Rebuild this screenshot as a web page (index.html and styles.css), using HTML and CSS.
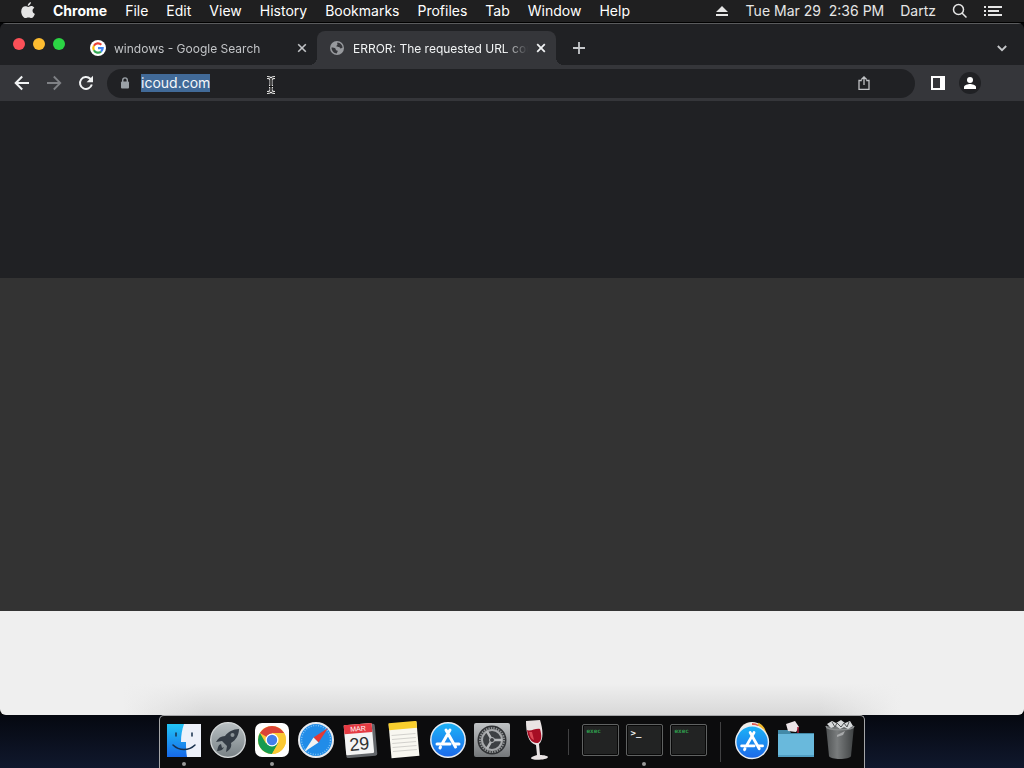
FILE: index.html
```html
<!DOCTYPE html>
<html lang="en">
<head>
<meta charset="utf-8">
<title>Desktop</title>
<link rel="stylesheet" href="styles.css">
</head>
<body>
<header class="menubar">
  <nav class="menus" aria-label="Application menu">
    <button class="apple" aria-label="Apple menu"><svg width="14" height="17" viewBox="0 0 14 17"><path fill="#e4e4e4" d="M9.900 0c.1 1.900-1.300 3.800-3.100 3.900C6.600 2.200 8.200.3 9.900 0zM7.200 4.900c.8 0 1.600-.8 3-.8 1.200 0 2.400.7 3.100 1.700-2.600 1.500-2.200 5 .6 6.100-.6 1.700-2 4.100-3.500 4.100-1 0-1.500-.6-2.900-.6s-1.900.6-2.900.6C2.500 16.100.2 12.500.2 9.400.2 6 2.300 4.200 4.300 4.200c1.300 0 2.200.7 2.900.7z"/></svg></button>
    <button class="app-name">Chrome</button>
    <button>File</button>
    <button>Edit</button>
    <button>View</button>
    <button>History</button>
    <button>Bookmarks</button>
    <button>Profiles</button>
    <button>Tab</button>
    <button>Window</button>
    <button>Help</button>
  </nav>
  <div class="status">
    <button aria-label="Eject"><svg width="12" height="12" viewBox="0 0 12 12" fill="#e6e6e6"><path d="M6 1l6 6H0zM0 9h12v2H0z"/></svg></button>
    <button class="clock">Tue Mar 29&nbsp; 2:36 PM</button>
    <button>Dartz</button>
    <button aria-label="Search"><svg width="16" height="16" viewBox="0 0 16 16" fill="none" stroke="#e6e6e6" stroke-width="1.500"><circle cx="6.500" cy="6.500" r="5"/><path d="M10 10l4.500 4.500"/></svg></button>
    <button aria-label="Notification Center"><svg width="18" height="12" viewBox="0 0 18 12" fill="#e6e6e6"><path d="M0 1h2v2H0zM4 1h14v2H4zM0 5h2v2H0zM4 5h11v2H4zM0 9h2v2H0zM4 9h14v2H4z"/></svg></button>
  </div>
</header>

<main class="window">
  <div class="tabstrip">
    <div class="lights">
      <button class="light red" aria-label="Close window"></button>
      <button class="light yellow" aria-label="Minimize window"></button>
      <button class="light green" aria-label="Zoom window"></button>
    </div>
    <div class="tab">
      <svg width="16" height="16" viewBox="0 0 16 16"><circle cx="8" cy="8" r="8" fill="#fff"/><g fill="none" stroke-width="2.200"><path stroke="#ea4335" d="M3.900 5.700A4.700 4.700 0 0 1 11.300 4.700"/><path stroke="#fbbc05" d="M3.900 10.300a4.700 4.700 0 0 1 0-4.600"/><path stroke="#34a853" d="M11 11.600a4.700 4.700 0 0 1-7.100-1.300"/><path stroke="#4285f4" d="M8 8.100h4.700a4.600 4.600 0 0 1-1.700 3.500"/></g></svg>
      <span class="tab-title">windows - Google Search</span>
      <button class="close" aria-label="Close tab"><svg width="10" height="10" viewBox="0 0 10 10" stroke="currentColor" stroke-width="1.600"><path d="M1.200 1.200l7.600 7.600M8.800 1.200L1.200 8.800"/></svg></button>
    </div>
    <div class="tab active">
      <svg width="16" height="16" viewBox="0 0 16 16"><circle cx="8" cy="8" r="7" fill="#97999d"/><path fill="#35363a" d="M8.500 2.400c2.800.2 5 2.600 5.100 5.300-.7 0-1 .9-2.100.7-.8-.2-.5-1.200-1.500-1.400-1-.2-2.200.2-2.500-.7-.2-.8.9-.9 1-1.700.1-.8-.7-1.300 0-2.200zM2.500 7.500c1.500.1 3.200.2 3.900 1 .6.7.1 1.300.8 1.800.6.400 1.500.2 1.500 1 0 .7-.8.900-.8 2.200-3-.1-5.400-2.600-5.400-6z"/></svg>
      <span class="tab-title">ERROR: The requested URL could not be retrieved</span>
      <button class="close" aria-label="Close tab"><svg width="10" height="10" viewBox="0 0 10 10" stroke="currentColor" stroke-width="1.800"><path d="M1.200 1.200l7.600 7.600M8.800 1.200L1.200 8.800"/></svg></button>
    </div>
    <button class="new-tab" aria-label="New tab"><svg width="12" height="12" viewBox="0 0 12 12" stroke="#c6c8cb" stroke-width="1.800"><path d="M6 0v12M0 6h12"/></svg></button>
    <button class="tab-search" aria-label="Search tabs"><svg width="10" height="7" viewBox="0 0 10 7" fill="none" stroke="#c6c8cb" stroke-width="1.800"><path d="M.8 1L5 5.200 9.200 1"/></svg></button>
  </div>

  <div class="toolbar">
    <button aria-label="Back"><svg width="16" height="16" viewBox="0 0 16 16" fill="none" stroke="#f1f3f4" stroke-width="2"><path d="M15 8H2M8.200 1.500L1.700 8l6.500 6.500"/></svg></button>
    <button aria-label="Forward"><svg width="16" height="16" viewBox="0 0 16 16" fill="none" stroke="#7f8185" stroke-width="1.800"><path d="M1 8h13M7.800 1.500L14.300 8l-6.500 6.500"/></svg></button>
    <button aria-label="Reload"><svg width="16" height="16" viewBox="0 0 16 16" fill="none" stroke="#f1f3f4" stroke-width="2"><path d="M13.800 9.600A6 6 0 1 1 12.300 3.800L14 5.500"/><path fill="#f1f3f4" stroke="none" d="M15 .8v6.400H8.600z"/></svg></button>
    <div class="omnibox">
      <svg width="10" height="12" viewBox="0 0 10 12"><path fill="none" stroke="#9aa0a6" stroke-width="1.400" d="M2.700 5V3.200a2.300 2.300 0 0 1 4.600 0V5"/><rect x="1" y="4.500" width="8" height="7" rx="1" fill="#9aa0a6"/></svg>
      <input class="url" type="text" value="icoud.com" aria-label="Address and search bar" spellcheck="false" autofocus>
      <button class="share" aria-label="Share"><svg width="12" height="14" viewBox="0 0 12 14" fill="none" stroke="#c0c2c5" stroke-width="1.300"><path d="M3.800 4.500H1v8.800h10V4.500H8.200M6 9V1M3.400 3.500L6 .9l2.600 2.600"/></svg></button>
    </div>
    <button aria-label="Side panel"><svg width="14" height="14" viewBox="0 0 14 14"><path fill="#fff" fill-rule="evenodd" d="M0 0h14v14H0zM2 2v10h7V2z"/></svg></button>
    <button class="profile" aria-label="Profile"><svg width="12" height="12" viewBox="0 0 12 12" fill="#fff"><circle cx="6" cy="3" r="3"/><path d="M0 12v-2c0-2 4-3 6-3s6 1 6 3v2z"/></svg></button>
  </div>

  <div class="page">
    <div class="band dark"></div>
    <div class="band grey"></div>
    <div class="band light-band"></div>
  </div>
  <svg class="pointer" width="10" height="18" viewBox="0 0 10 18" fill="none"><path stroke="#e8e8e8" stroke-width="3" d="M1 1.500c2.500 0 4 .5 4 2.500v10c0 2-1.500 2.500-4 2.500M9 1.500C6.500 1.500 5 2 5 4v10c0 2 1.500 2.500 4 2.500M3 10.500h4"/><path stroke="#111" stroke-width="1" d="M1 1.500c2.500 0 4 .5 4 2.500v10c0 2-1.500 2.500-4 2.500M9 1.500C6.500 1.500 5 2 5 4v10c0 2 1.500 2.500 4 2.500M3 10.500h4"/></svg>
</main>

<footer class="desktop">
  <nav class="dock" aria-label="Dock">
    <button class="app running" aria-label="Finder"><svg width="36" height="36" viewBox="0 0 36 36"><defs><linearGradient id="finder" x2="0" y2="1"><stop stop-color="#22c5f5"/><stop offset="1" stop-color="#1769ea"/></linearGradient></defs><path fill="#edf1fa" d="M1 2h34v33H1z"/><path fill="url(#finder)" d="M1 2h17c-2 6-3 11-3 18h5c0 5 0 10 1 15H1z"/><path fill="none" stroke="#17304d" stroke-width="1.500" stroke-linecap="round" d="M10 11v3M26 11v3M7 23c6 6 16 6 22 0"/></svg></button>
    <button class="app" aria-label="Launchpad"><svg width="36" height="36" viewBox="0 0 36 36"><defs><linearGradient id="launch" x2="0" y2="1"><stop stop-color="#b9c0c3"/><stop offset="1" stop-color="#788185"/></linearGradient></defs><circle cx="18" cy="18" r="17.300" fill="url(#launch)" stroke="#d4d8d9" stroke-width="1.300"/><path fill="#343c45" d="M29 7c-6 0-11 3-14 7-4 0-7 2-9 6l6-1 5 5-1 6c4-2 6-5 5-9 5-3 8-8 8-14zM11 22c-3 1-3 4-4 7 3 0 6-1 7-4l-2 1z"/><circle cx="22.500" cy="13" r="2" fill="#8b9397"/></svg></button>
    <button class="app running" aria-label="Chrome"><svg width="36" height="36" viewBox="0 0 36 36"><rect x="1" y="1" width="34" height="34" rx="7" fill="#fff"/><circle cx="18" cy="18" r="14" fill="#fbc934"/><path fill="#db4437" d="M18 18L5.900 11A14 14 0 0 1 30.100 11H18z"/><path fill="#169b50" d="M5.900 11A14 14 0 0 0 18 32l6-10.500L18 18l-6 3.500z"/><path fill="#fbc934" d="M18 11h12.100A14 14 0 0 1 18 32l6-10.500z"/><circle cx="18" cy="18" r="6.500" fill="#fff"/><circle cx="18" cy="18" r="5.200" fill="#437fea"/></svg></button>
    <button class="app" aria-label="Safari"><svg width="36" height="36" viewBox="0 0 36 36"><circle cx="18" cy="18" r="17" fill="#218ce8" stroke="#e8eaed" stroke-width="2"/><circle cx="18" cy="18" r="14.500" fill="none" stroke="#7cc2f6" stroke-width="1.500" stroke-dasharray="1 1.500"/><path fill="#e53935" d="M30 6L15.500 15.500l5 5z"/><path fill="#f2f2f2" d="M6 30l9.500-14.500 5 5z"/></svg></button>
    <button class="app" aria-label="Calendar"><svg width="36" height="36" viewBox="0 0 36 36"><g transform="rotate(-5 18 18)"><rect x="3" y="3" width="31" height="32" rx="2" fill="#63666a"/><rect x="3" y="2" width="28" height="30" rx="1" fill="#f4f4f4"/><path fill="#e53b43" d="M3 2h28v9H3z"/><text x="17" y="9" text-anchor="middle" class="cal-month">MAR</text><text x="17" y="28" text-anchor="middle" class="cal-day">29</text></g></svg></button>
    <button class="app" aria-label="Notes"><svg width="36" height="38" viewBox="0 0 36 38"><g transform="rotate(-5 18 19)"><path fill="#f8f7f0" d="M4 2h28v34H4z"/><path fill="#f9cf2e" d="M4 1h28v7H4z"/><path stroke="#d2d1cc" d="M6 13.500h24M6 17.500h24M6 21.500h24M6 25.500h24M6 29.500h24"/></g></svg></button>
    <button class="app" aria-label="App Store"><svg width="36" height="36" viewBox="0 0 36 36"><defs><linearGradient id="store" x2="0" y2="1"><stop stop-color="#1cb4f7"/><stop offset="1" stop-color="#1c68ea"/></linearGradient><g id="store-icon"><circle cx="18" cy="18" r="17.200" fill="url(#store)" stroke="#e9edf2" stroke-width="1.500"/><path fill="none" stroke="#fff" stroke-width="3" stroke-linecap="round" d="M16 8l9.500 17M20 8l-8 14M7 22h13M25 22h4M10.500 25l-.5 1"/></g></defs><use href="#store-icon"/></svg></button>
    <button class="app" aria-label="System Preferences"><svg width="36" height="36" viewBox="0 0 36 36"><defs><linearGradient id="pref" x2="0" y2="1"><stop stop-color="#c0c3c5"/><stop offset="1" stop-color="#74777a"/></linearGradient></defs><rect y="1" width="36" height="34" rx="2" fill="url(#pref)"/><circle cx="18" cy="18" r="14.500" fill="#303235"/><circle cx="18" cy="18" r="12" fill="none" stroke="#8e9193" stroke-width="2" stroke-dasharray="1.500 1"/><circle cx="18" cy="18" r="10" fill="#3d4043" stroke="#a6a8aa" stroke-width="2"/><path stroke="#b6b8ba" stroke-width="2.500" d="M18 18h10M18 18l-5-8.700M18 18l-5 8.700"/><circle cx="18" cy="18" r="2.500" fill="#393b3e" stroke="#b6b8ba"/></svg></button>
    <button class="app" aria-label="Wine"><svg width="36" height="42" viewBox="0 0 36 42"><path fill="#e9e3e3" d="M8 2l14-1c3 9 4 20-1 24l1 11c4 0 8 1 8 2 0 3-17 4-17 1 0-1 3-2 6-3l-1-10C10 24 8 13 8 2z"/><path fill="#a60e24" d="M9 11c4 2 8-2 13-1 2 7 2 12-2 14-6 1-10-5-11-13z"/><path fill="#dc4a57" d="M11 13h3l2 8c-3-1-4-4-5-8z"/></svg></button>
    <span class="divider"></span>
    <button class="app" aria-label="Exec"><span class="term exec">exec</span></button>
    <button class="app running" aria-label="Terminal"><span class="term">&gt;_</span></button>
    <button class="app" aria-label="Exec"><span class="term exec">exec</span></button>
    <span class="divider"></span>
    <button class="app" aria-label="Applications"><svg width="36" height="40" viewBox="0 0 36 40"><circle cx="18" cy="16" r="14" fill="#f3eee8"/><path fill="none" stroke="#f0b92c" stroke-width="3" d="M24 4c4 2 6 5 7 9"/><path fill="none" stroke="#e35a50" stroke-width="2" d="M18 4c3 0 4 0 6 2"/><use href="#store-icon" transform="translate(1 5) scale(.95)"/></svg></button>
    <button class="app" aria-label="Downloads"><svg width="36" height="38" viewBox="0 0 36 38"><path fill="#438aa8" d="M0 9h11l2 3h23v8H0z"/><path fill="#69b9dc" d="M0 13h36v23H0z"/><path fill="#519fc4" d="M0 34h36v2H0z"/><path fill="#ece5e8" d="M8 3l9-3 4 6-3 5-8-1z"/><path stroke="#a71b39" stroke-width="1.500" d="M20 6v6"/></svg></button>
    <button class="app" aria-label="Trash"><svg width="32" height="40" viewBox="0 0 32 40"><defs><linearGradient id="bin"><stop stop-color="#505354"/><stop offset=".4" stop-color="#797c7d"/><stop offset="1" stop-color="#3e4142"/></linearGradient></defs><path fill="url(#bin)" d="M2 6h28l-3 30c-1 4-21 4-22 0z"/><path fill="none" stroke="#8b8e8f" stroke-width="1.500" d="M2 6c1 5 27 5 28 0"/><path fill="#d8dadb" d="M3 4l5-3 4 2 5-3 4 3 5-2 3 5-5 3-4-2-4 2-4-3-5 2z"/><path fill="none" stroke="#505354" d="M8 2l3 5 2-4 4 4 3-4 3 4 2-5"/><path fill="#a7a9aa" d="M13 15l8-4-2 4-6 2z"/></svg></button>
  </nav>
</footer>
<script src="script.js"></script>
</body>
</html>
```
FILE: styles.css
```css
* { box-sizing: border-box; }

body {
  margin: 0;
  height: 100vh;
  display: flex;
  flex-direction: column;
  overflow: hidden;
  background: #050608;
  font-family: Inter, "Liberation Sans", sans-serif;
  font-size: 14px;
  color: #f4f4f4;
}

button {
  padding: 0;
  border: 0;
  background: none;
  color: inherit;
  font: inherit;
  white-space: nowrap;
}

svg { display: block; flex: none; }

.menubar {
  flex: none;
  display: flex;
  justify-content: space-between;
  height: 23px;
  padding: 0 22px 1px 21px;
  background: #1f1f20;
  border-bottom: 1px solid #000;
}

.menus, .status { display: flex; align-items: center; }
.menus { gap: 18px; color: #fff; }
.status { gap: 16px; color: #e6e6e6; }
.app-name { font-weight: 700; }
.status button:first-child { margin-right: 2px; }

.window {
  flex: 1;
  position: relative;
  display: flex;
  flex-direction: column;
  min-height: 0;
  border-radius: 6px;
  overflow: hidden;
  background: #202124;
}

.tabstrip {
  flex: none;
  display: flex;
  align-items: flex-end;
  height: 42px;
  padding-right: 17px;
  border-top: 1px solid #5a5b5d;
}

.lights {
  display: flex;
  gap: 8px;
  padding: 0 17px 15px 13px;
}
.light { width: 12px; height: 12px; border-radius: 50%; }
.red { background: #fc5058; }
.yellow { background: #fdbc30; }
.green { background: #2bd544; }

.tab {
  flex: 0 1 239px;
  display: flex;
  align-items: center;
  gap: 8px;
  min-width: 0;
  height: 34px;
  padding: 0 10px 0 12px;
  font-size: 12px;
  color: #c2c4c7;
}
.tab.active {
  position: relative;
  background: #35363a;
  border-radius: 8px 8px 0 0;
  color: #f1f3f4;
}
.tab.active::before,
.tab.active::after {
  content: "";
  position: absolute;
  bottom: 0;
  width: 8px;
  height: 8px;
}
.tab.active::before { right: 100%; background: radial-gradient(circle at 0 0, transparent 8px, #35363a 8px); }
.tab.active::after { left: 100%; background: radial-gradient(circle at 100% 0, transparent 8px, #35363a 8px); }
.tab-title {
  flex: 1;
  overflow: hidden;
  white-space: nowrap;
  mask-image: linear-gradient(to right, #000 calc(100% - 24px), transparent);
}
.tab:not(.active) { flex-basis: 235px; padding-left: 8px; }

.new-tab { align-self: center; margin: 7px 0 0 17px; }
.tab-search { align-self: center; margin: 7px 0 0 auto; }

.toolbar {
  flex: none;
  display: flex;
  align-items: center;
  gap: 16px;
  height: 36px;
  padding: 0 43px 0 14px;
  background: #35363a;
}
.omnibox {
  flex: 1;
  display: flex;
  align-items: center;
  gap: 11px;
  min-width: 0;
  height: 29px;
  margin-left: -3px;
  padding: 0 45px 1px 13px;
  border-radius: 15px;
  background: #202124;
}
.url {
  flex: 1;
  min-width: 0;
  padding: 0;
  border: 0;
  outline: 0;
  background: none;
  color: #f4f7fa;
  font: 14px/18px Inter, "Liberation Sans", sans-serif;
}
.url::selection { background: #416a98; color: #f4f7fa; }
.profile {
  display: grid;
  place-items: center;
  width: 22px;
  height: 22px;
  margin-left: -2px;
  border-radius: 50%;
  background: #202124;
}

.page { flex: 1; display: flex; flex-direction: column; }
.band { flex: 333 0 0; }
.dark { flex-grow: 177; background: #202124; }
.grey { background: #333; }
.light-band {
  flex-grow: 104;
  background: linear-gradient(#efefef 70%, transparent), linear-gradient(to right, #efefef 12%, #d8d8d8 20%, #d8d8d8 80%, #efefef 88%);
}

.pointer { position: absolute; left: 266px; top: 53px; }

.desktop {
  flex: none;
  display: flex;
  justify-content: center;
  background: linear-gradient(#050810, #10182d);
}
.dock {
  display: flex;
  height: 53px;
  padding: 0 2px;
  border: 1px solid #a5a6a8;
  border-bottom: 0;
  border-radius: 5px 5px 0 0;
  background: #0c0c0d;
}
.app {
  position: relative;
  display: flex;
  justify-content: center;
  align-items: center;
  width: 44px;
  height: 48px;
}
.running::after {
  content: "";
  position: absolute;
  bottom: -2px;
  width: 4px;
  height: 4px;
  border-radius: 50%;
  background: #999;
}
.divider {
  width: 1px;
  height: 26px;
  margin: 13px 9px 0 10px;
  background: #414142;
}
.divider:nth-of-type(2) { height: 40px; margin-top: 6px; }
.term {
  width: 37px;
  height: 32px;
  padding: 2px 4px;
  border: 1px solid #606262;
  border-radius: 2px;
  background: #222323;
  box-shadow: inset 0 0 0 1px #080808;
  font: 700 9px/12px "DejaVu Sans Mono", monospace;
  text-align: left;
}
.exec { color: #2f9a4c; font-size: 6px; line-height: 8px; }
.cal-month { font: 7px "Liberation Sans", sans-serif; fill: #fff; }
.cal-day { font: 18px "Liberation Sans", sans-serif; fill: #303030; }
```
FILE: script.js
```js
const url = document.querySelector(".url");
url.focus();
url.select();
```
